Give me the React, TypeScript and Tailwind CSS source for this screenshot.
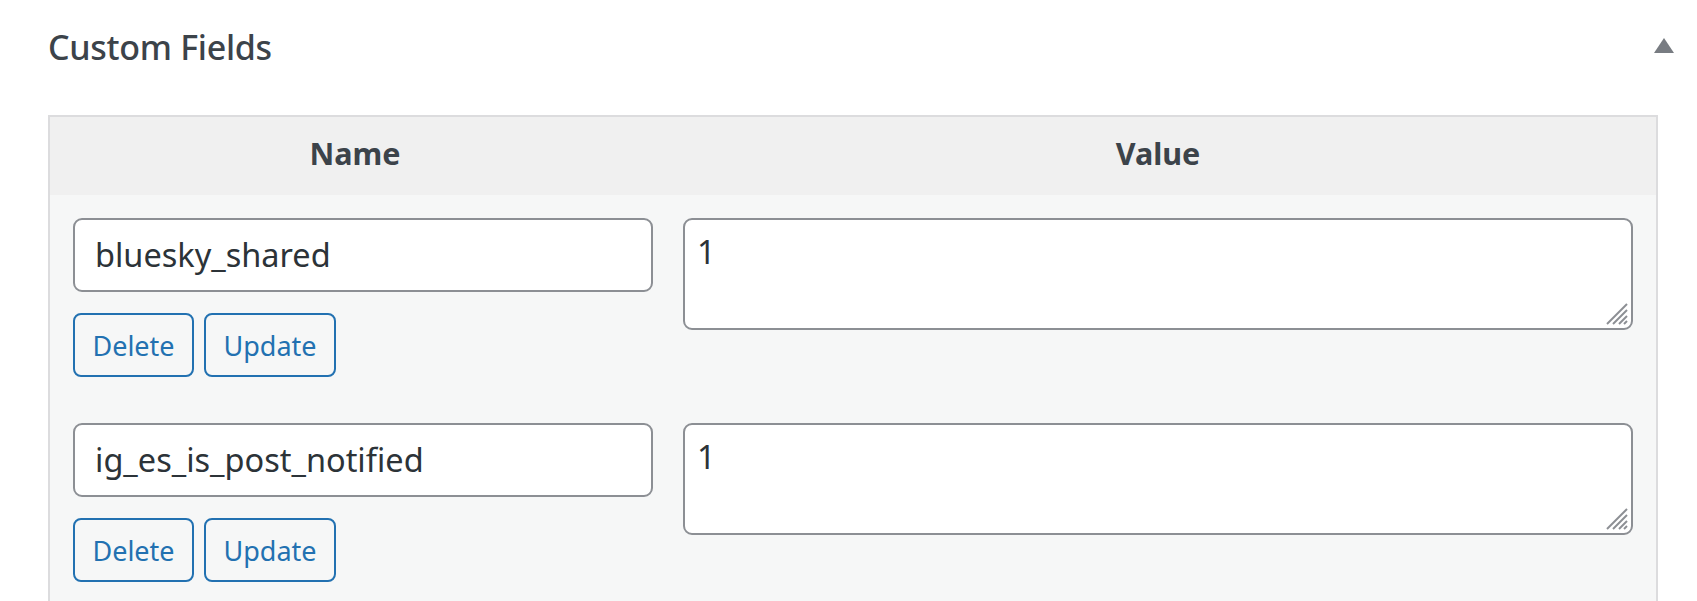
import React from "react";

const font = { fontFamily: '"Noto Sans", "Open Sans", sans-serif' };

function Row({ name, value }: { name: string; value: string }) {
  return (
    <div className="flex pt-[23px] pb-[23px]">
      <div className="w-[610px] pl-[23px] pr-[7px] flex flex-col">
        <div className="h-[74px] w-[580px] rounded-[9px] border-2 border-[#8c8f94] bg-white flex items-center pl-[20px] text-[32.5px] text-[#2c3338] leading-none">
          {name}
        </div>
        <div className="flex gap-[10px] mt-[21px]">
          <button className="h-[64px] w-[121px] rounded-[8px] border-2 border-[#2271b1] bg-[#f6f7f7] text-[#2271b1] text-[27px] leading-none flex items-center justify-center">
            Delete
          </button>
          <button className="h-[64px] w-[132px] rounded-[8px] border-2 border-[#2271b1] bg-[#f6f7f7] text-[#2271b1] text-[27px] leading-none flex items-center justify-center">
            Update
          </button>
        </div>
      </div>
      <div className="w-[996px] pl-[23px] pr-[23px]">
        <div className="relative h-[112px] w-[950px] rounded-[9px] border-2 border-[#8c8f94] bg-white pl-[12px] pt-[12px] text-[32.5px] text-[#2c3338] leading-[40px]">
          {value}
          <svg className="absolute right-[2px] bottom-[2px]" width="26" height="26" viewBox="0 0 26 26">
            <line x1="4" y1="24" x2="24" y2="4" stroke="#8c8f94" strokeWidth="2" />
            <line x1="10" y1="24" x2="24" y2="10" stroke="#8c8f94" strokeWidth="2" />
            <line x1="16" y1="24" x2="24" y2="16" stroke="#8c8f94" strokeWidth="2" />
            <line x1="21" y1="24" x2="24" y2="21" stroke="#8c8f94" strokeWidth="2" />
          </svg>
        </div>
      </div>
    </div>
  );
}

export default function App() {
  return (
    <div className="w-[1697px] h-[601px] bg-white overflow-hidden" style={font}>
      <div className="flex items-center justify-between h-[96px] pl-[48px] pr-[23px] pb-[2px]">
        <h2 className="text-[34px] font-medium tracking-[-0.3px] text-[#3c434a] leading-none">Custom Fields</h2>
        <svg width="20" height="15" viewBox="0 0 20 15" className="-mt-[4px]">
          <polygon points="10,0 20,15 0,15" fill="#787c82" />
        </svg>
      </div>
      <div className="mt-[19px] ml-[48px] w-[1610px] border-2 border-b-0 border-[#dcdcde] bg-[#f6f7f7] h-[600px]">
        <div className="flex h-[78px] bg-[#f0f0f0] items-center pb-[4px] font-bold text-[30.5px] text-[#3c434a]">
          <div className="w-[610px] text-center">Name</div>
          <div className="w-[996px] text-center">Value</div>
        </div>
        <Row name="bluesky_shared" value="1" />
        <Row name="ig_es_is_post_notified" value="1" />
      </div>
    </div>
  );
}
